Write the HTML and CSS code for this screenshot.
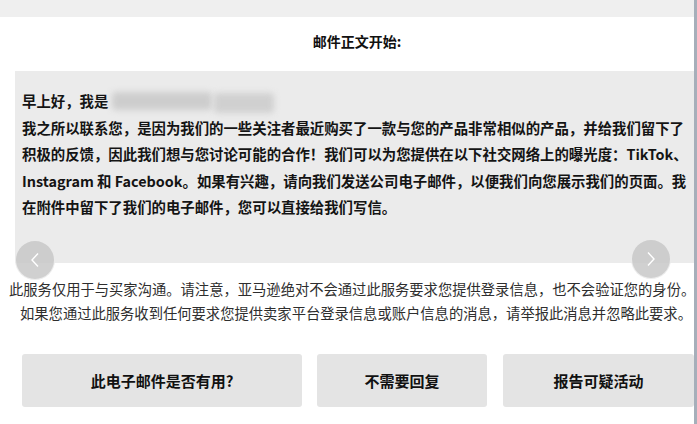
FILE: index.html
```html
<!DOCTYPE html>
<html lang="zh-CN">
<head>
<meta charset="utf-8">
<title>邮件</title>
<link rel="stylesheet" href="styles.css">
</head>
<body>
<div class="page">
  <div class="topbar"></div>
  <div class="title">邮件正文开始:</div>
  <div class="mail-wrap">
    <div class="mail-body">
      <p class="line">早上好，我是<span class="blur"></span><span class="blur blur2"></span></p>
      <p class="line">我之所以联系您，是因为我们的一些关注者最近购买了一款与您的产品非常相似的产品，并给我们留下了</p>
      <p class="line">积极的反馈，因此我们想与您讨论可能的合作！我们可以为您提供在以下社交网络上的曝光度：TikTok、</p>
      <p class="line">Instagram 和 Facebook。如果有兴趣，请向我们发送公司电子邮件，以便我们向您展示我们的页面。我</p>
      <p class="line">在附件中留下了我们的电子邮件，您可以直接给我们写信。</p>
    </div>
    <div class="nav nav-prev"><svg width="12" height="16" viewBox="0 0 12 16"><path d="M9 1.5 L3 8 L9 14.5" fill="none" stroke="#fff" stroke-width="1.4"/></svg></div>
    <div class="nav nav-next"><svg width="12" height="16" viewBox="0 0 12 16"><path d="M3 1.5 L9 8 L3 14.5" fill="none" stroke="#fff" stroke-width="1.4"/></svg></div>
  </div>
  <div class="notice">
    <div class="l1">此服务仅用于与买家沟通。请注意，亚马逊绝对不会通过此服务要求您提供登录信息，也不会验证您的身份。</div>
    <div class="l2">如果您通过此服务收到任何要求您提供卖家平台登录信息或账户信息的消息，请举报此消息并忽略此要求。</div>
  </div>
  <div class="actions">
    <button class="btn b1">此电子邮件是否有用?</button>
    <button class="btn b2">不需要回复</button>
    <button class="btn b3">报告可疑活动</button>
  </div>
</div>
</body>
</html>
```
FILE: styles.css
```css
* { box-sizing: border-box; }
html, body { margin: 0; padding: 0; background: #fff; }
body {
  width: 697px;
  height: 424px;
  overflow: hidden;
  font-family: "Noto Sans CJK SC", "Noto Sans", sans-serif;
  color: #111;
}
.page {
  width: 697px;
  height: 424px;
  border-right: 3px solid #a6afba;
  background: #fff;
}
.topbar {
  height: 17px;
  background: #efefef;
}
.title {
  height: 54px;
  padding-top: 14px;
  text-align: center;
  font-size: 14px;
  font-weight: 700;
  line-height: 20px;
  padding-left: 20px;
}
.mail-wrap {
  position: relative;
}
.mail-body {
  margin-left: 15px;
  height: 192px;
  background: #ebebeb;
  padding: 17px 0 0 7px;
  font-size: 14.4px;
  font-weight: 700;
  line-height: 26.5px;
  color: #141414;
  overflow: hidden;
}
.mail-body .line {
  margin: 0;
  white-space: nowrap;
}
.blur {
  display: inline-block;
  width: 100px;
  height: 18px;
  vertical-align: -3px;
  margin-left: 4px;
  background: #cdcdcd;
  filter: blur(3px);
  border-radius: 4px;
}
.blur2 {
  width: 60px;
  margin-left: 2px;
  height: 20px;
  vertical-align: -6px;
  background: #d0d0d0;
}
.nav {
  position: absolute;
  width: 40px;
  height: 40px;
  border-radius: 50%;
  background: rgba(200, 200, 200, 0.85);
  border: 1px solid rgba(255,255,255,0.6);
  display: flex;
  align-items: center;
  justify-content: center;
}
.nav-prev { left: 15px; top: 169px; }
.nav-next { left: 631px; top: 168px; }
.notice {
  margin-top: 14px;
  font-size: 14.3px;
  line-height: 24px;
  color: #2e2e2e;
  white-space: nowrap;
}
.notice .l1 { padding-left: 9px; }
.notice .l2 { padding-left: 20px; }
.actions {
  display: flex;
  margin-top: 29px;
  padding-left: 22px;
  gap: 15px;
}
.btn {
  height: 53px;
  border: none;
  border-radius: 3px;
  background: #e4e4e4;
  font-family: "Noto Sans CJK SC", "Noto Sans", sans-serif;
  font-size: 15px;
  font-weight: 700;
  color: #111;
  padding: 0;
}
.b1 { width: 280px; }
.b2 { width: 170px; }
.b3 { width: 191px; margin-left: 1px; }
```
